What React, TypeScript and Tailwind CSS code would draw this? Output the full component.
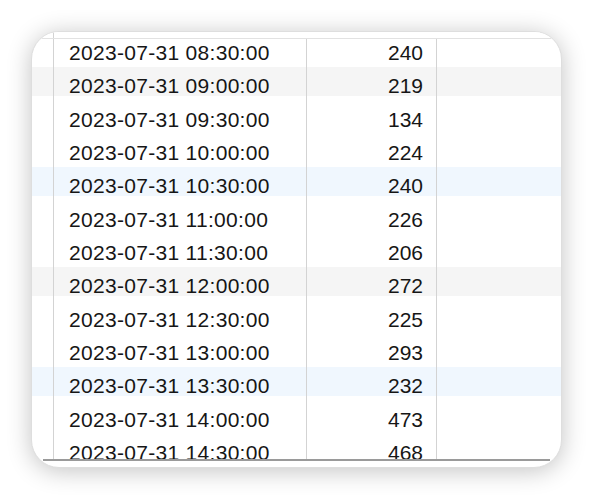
const rows: [string, number][] = [
  ['2023-07-31 08:30:00', 240],
  ['2023-07-31 09:00:00', 219],
  ['2023-07-31 09:30:00', 134],
  ['2023-07-31 10:00:00', 224],
  ['2023-07-31 10:30:00', 240],
  ['2023-07-31 11:00:00', 226],
  ['2023-07-31 11:30:00', 206],
  ['2023-07-31 12:00:00', 272],
  ['2023-07-31 12:30:00', 225],
  ['2023-07-31 13:00:00', 293],
  ['2023-07-31 13:30:00', 232],
  ['2023-07-31 14:00:00', 473],
  ['2023-07-31 14:30:00', 468],
];

// stripes only on every third row, alternating gray / blue
function stripe(i: number) {
  if (i === 1 || i === 7) return 'bg-[linear-gradient(to_bottom,#f5f5f5_29px,transparent_29px)]';
  if (i === 4 || i === 10) return 'bg-[linear-gradient(to_bottom,#f0f7fe_29px,transparent_29px)]';
  return '';
}

export default function App() {
  return (
    <div className="w-[592px] h-[500px] bg-white pt-[31px] pl-[31px] overflow-hidden">
      <div
        className="w-[531px] h-[437px] rounded-[28px] border border-[#dedede] bg-white overflow-hidden flex flex-col shadow-[0_3px_24px_rgba(0,0,0,0.24)]"
        style={{ fontFamily: '"Liberation Sans", Arial, sans-serif' }}
      >
        {/* header strip, scrolled away */}
        <div className="relative z-10 h-[7px] shrink-0 flex border-b border-[#e2e2e2] bg-white">
          <div className="w-[22px] border-r border-[#d3d3d3]" />
        </div>
        <div className="-mt-[5px] h-[425px] overflow-hidden">
          {rows.map(([ts, v], i) => (
            <div key={ts} className={`flex h-[33.33px] text-[21px] text-[#161616] tracking-[0.3px] ${stripe(i)}`}>
              <div className="w-[22px] shrink-0 border-r border-[#d3d3d3]" />
              <div className="w-[253px] shrink-0 border-r border-[#d3d3d3] pl-[15px] pt-[4px] flex items-center">
                {ts}
              </div>
              <div className="w-[130px] shrink-0 border-r border-[#d3d3d3] pr-[13px] pt-[4px] flex items-center justify-end tracking-normal">
                {v}
              </div>
              <div className="flex-1" />
            </div>
          ))}
        </div>
        <div className="h-[2px] shrink-0 ml-[11px] mr-[11px] bg-[#9a9a9a]" />
      </div>
    </div>
  );
}
